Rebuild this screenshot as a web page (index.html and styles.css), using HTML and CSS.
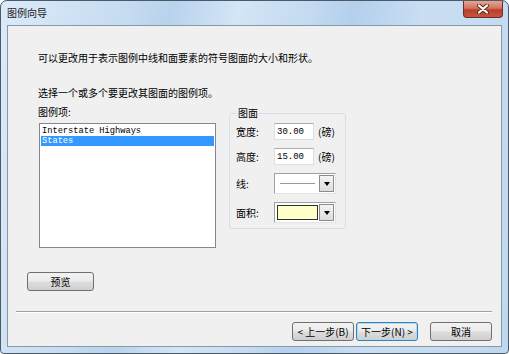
FILE: index.html
```html
<!DOCTYPE html>
<html>

<head>
  <title>图例向导</title>
  <link rel="stylesheet" href="styles.css">
</head>

<body>
  <div class="window">
    <div class="titlebar">
      <span class="title">图例向导</span>
      <button type="button" class="close" aria-label="关闭">
        <svg width="14" height="10" viewBox="0 0 14 10">
          <path d="M3 1.5 L11 8.5 M11 1.5 L3 8.5" stroke="#5a2a20" stroke-width="4" stroke-linecap="round" />
          <path d="M3 1.5 L11 8.5 M11 1.5 L3 8.5" stroke="#fff" stroke-width="2.2" stroke-linecap="round" />
        </svg>
      </button>
    </div>

    <div class="client">
      <div class="content">
        <p class="intro">可以更改用于表示图例中线和面要素的符号图面的大小和形状。</p>
        <p class="select-hint">选择一个或多个要更改其图面的图例项。</p>

        <div class="editor">
          <div class="legend-col">
            <label class="field-label" for="legend-items">图例项:</label>
            <ul id="legend-items" class="listbox">
              <li>Interstate Highways</li>
              <li class="selected">States</li>
            </ul>
          </div>

          <fieldset class="patch-group">
            <legend>图面</legend>

            <div class="patch-row">
              <label for="patch-width">宽度:</label>
              <input type="text" id="patch-width" class="num-input" value="30.00">
              <span class="unit">(磅)</span>
            </div>

            <div class="patch-row">
              <label for="patch-height">高度:</label>
              <input type="text" id="patch-height" class="num-input" value="15.00">
              <span class="unit">(磅)</span>
            </div>

            <div class="patch-row combo-row">
              <label>线:</label>
              <div class="combo">
                <div class="combo-value"><span class="line-sample"></span></div>
                <div class="combo-arrow"></div>
              </div>
            </div>

            <div class="patch-row combo-row area-row">
              <label>面积:</label>
              <div class="combo">
                <div class="combo-value"><span class="area-sample"></span></div>
                <div class="combo-arrow"></div>
              </div>
            </div>
          </fieldset>
        </div>

        <button type="button" class="btn preview-btn">预览</button>
      </div>

      <div class="separator"></div>

      <div class="footer">
        <button type="button" class="btn nav-btn">&lt; 上一步(B)</button>
        <button type="button" class="btn nav-btn default">下一步(N) &gt;</button>
        <button type="button" class="btn nav-btn cancel">取消</button>
      </div>
    </div>
  </div>
</body>

</html>
```

FILE: styles.css
```css
body {
  margin: 0;
  font-family: "Noto Sans CJK SC", "Liberation Sans", sans-serif;
  font-size: 10px;
  line-height: 12px;
  color: #000;
  background: #fff;
}

.window {
  width: 509px;
  height: 354px;
  box-sizing: border-box;
  border: 1px solid #4c5a68;
  border-radius: 7px 7px 4px 4px;
  padding: 0 6px 6px;
  display: flex;
  flex-direction: column;
  background: linear-gradient(100deg, #dbeaf9 0%, #c6dcf1 22%, #b8d3ed 30%, #d3e5f6 42%, #c3daf1 55%, #b3d0ed 62%, #c9def3 75%, #c0d8ef 100%);
}

.titlebar {
  height: 24px;
  display: flex;
  justify-content: space-between;
  align-items: flex-start;
}

.title {
  margin-top: 6px;
  color: #1a1a1a;
}

.close {
  width: 40px;
  height: 17px;
  margin-right: -1px;
  padding: 0;
  border: 1px solid #6b2d24;
  border-top: none;
  border-radius: 0 0 4px 4px;
  background: linear-gradient(#e7a594 0%, #d2735f 45%, #b8402b 55%, #c9543c 100%);
  display: flex;
  align-items: center;
  justify-content: center;
}

.client {
  flex: 1;
  border: 1px solid #8a98a6;
  background-color: #f0f0f0;
  display: flex;
  flex-direction: column;
}

.content {
  padding: 26px 0 0 30px;
}

p {
  margin: 0;
}

.select-hint {
  margin-top: 23px;
}

.editor {
  display: flex;
  align-items: flex-start;
  gap: 13px;
  margin-top: 7px;
}

.legend-col {
  display: flex;
  flex-direction: column;
}

.field-label {
  margin-bottom: 5px;
}

.listbox {
  list-style: none;
  margin: 0 0 0 1px;
  padding: 2px 1px 0;
  width: 177px;
  height: 125px;
  box-sizing: border-box;
  border: 1px solid #828790;
  background: #fff;
  font-family: "Liberation Mono", monospace;
  font-size: 8.7px;
  line-height: 10px;
}

.listbox li {
  padding-left: 1px;
}

.listbox .selected {
  background-color: #3399ff;
  color: #fff;
}

.patch-group {
  margin: 1px 0 0;
  padding: 4px 8px 5px 6px;
  width: 117px;
  box-sizing: border-box;
  border: 1px solid #d5dfe5;
  border-radius: 3px;
}

.patch-group legend {
  padding: 0 1px;
  margin-left: 1px;
  line-height: 12px;
}

.patch-row {
  display: flex;
  align-items: center;
  height: 17px;
  margin-bottom: 8px;
}

.patch-row label {
  width: 38px;
}

.combo-row {
  height: 21px;
}

.area-row {
  margin-top: 1px;
  margin-bottom: 0;
}

.num-input {
  width: 40px;
  height: 17px;
  box-sizing: border-box;
  margin: 0;
  padding: 0 2px;
  border: 1px solid #dbdfe6;
  border-top-color: #abadb3;
  font-family: "Liberation Mono", monospace;
  font-size: 9px;
  color: #000;
  background: #fff;
}

.unit {
  margin-left: 4px;
}

.combo {
  width: 62px;
  height: 21px;
  box-sizing: border-box;
  border: 1px solid #a0a0a0;
  border-right-color: #e3e3e3;
  border-bottom-color: #e3e3e3;
  background: #fff;
  display: flex;
  padding: 1px;
}

.combo-value {
  flex: 1;
  display: flex;
  align-items: center;
  justify-content: center;
  border: 1px solid #fff;
}

.line-sample {
  width: 35px;
  height: 1px;
  background: #9a9a9a;
}

.area-sample {
  width: 100%;
  height: 100%;
  box-sizing: border-box;
  border: 1px solid #303030;
  background: #ffffc8;
}

.combo-arrow {
  width: 15px;
  box-sizing: border-box;
  border: 1px solid #8c8c8c;
  background: linear-gradient(#f4f4f4, #dcdcdc);
  display: flex;
  align-items: center;
  justify-content: center;
}

.combo-arrow::after {
  content: "";
  border-left: 3px solid transparent;
  border-right: 3px solid transparent;
  border-top: 4px solid #000;
}

.btn {
  height: 19px;
  box-sizing: border-box;
  margin: 0;
  padding: 0;
  border: 1px solid #707070;
  border-radius: 3px;
  background: linear-gradient(#f2f2f2 0%, #ebebeb 48%, #dddddd 52%, #cfcfcf 100%);
  font-family: "Noto Sans CJK SC", "Liberation Sans", sans-serif;
  font-size: 10px;
  line-height: 12px;
  color: #000;
  cursor: pointer;
}

.preview-btn {
  width: 67px;
  margin: 24px 0 0 -11px;
  display: block;
}

.separator {
  margin: 20px 9px 0 8px;
  height: 1px;
  background: #a0a0a0;
  border-bottom: 1px solid #fff;
}

.footer {
  display: flex;
  justify-content: flex-end;
  gap: 2px;
  margin-top: 9px;
  padding-right: 9px;
}

.nav-btn {
  width: 62px;
}

.nav-btn.default {
  border-color: #3c7fb1;
  box-shadow: inset 0 0 0 1px #a8dcf7;
}

.nav-btn.cancel {
  margin-left: 10px;
}
```
